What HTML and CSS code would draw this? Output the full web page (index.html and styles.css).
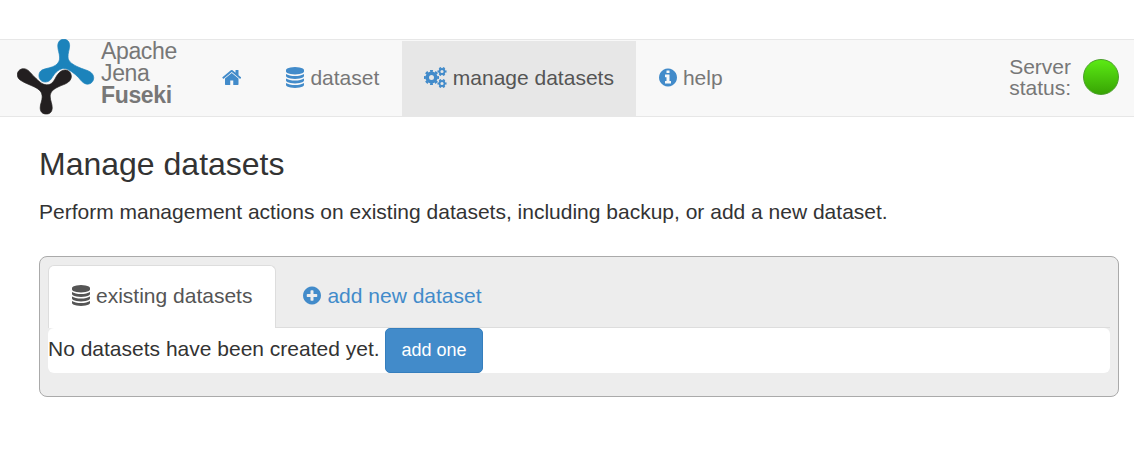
FILE: index.html
```
<!DOCTYPE html>
<html lang="en">
<head>
<meta charset="utf-8">
<title>Apache Jena Fuseki</title>
<link rel="stylesheet" href="styles.css">
</head>
<body>
<svg class="defs" width="0" height="0">
  <symbol id="database" viewBox="128 0 1536 1792"><path d="M896 768q237 0 443-43t325-127v170q0 69-103 128t-280 93.5-385 34.5-385-34.5-280-93.5-103-128v-170q119 84 325 127t443 43zm0 768q237 0 443-43t325-127v170q0 69-103 128t-280 93.5-385 34.5-385-34.5-280-93.5-103-128v-170q119 84 325 127t443 43zm0-384q237 0 443-43t325-127v170q0 69-103 128t-280 93.5-385 34.5-385-34.5-280-93.5-103-128v-170q119 84 325 127t443 43zm0-1152q208 0 385 34.5t280 93.5 103 128v128q0 69-103 128t-280 93.5-385 34.5-385-34.5-280-93.5-103-128v-128q0-69 103-128t280-93.5 385-34.5z"/></symbol>
</svg>
<nav class="navbar">
  <a class="brand">
    <svg class="logo" viewBox="0 0 78 78">
      <path fill="#1c83bb" stroke="#1c83bb" stroke-width=".7" d="M46.700 .3C50.500 .3 52.800 3 52.600 7C52.400 11 50.800 14 51 18C51.200 22 54 24.500 60 27.500C66 30.500 71 31 74 33.500C77.500 36.500 77.500 41 74.500 43.700C71 46.500 67 45 64 41.500C61 37.500 56 33 51 30.500C48 29 45.500 29 42 31C37 34 36 38 33.500 40.800C30.500 43.800 26 43.600 23.500 41C21 38 21.500 33 25 31C29 29 35 29 39 26C42 23.500 42.800 21 42.600 18C42.400 14 40.800 11 40.800 7C40.800 3 43 .3 46.700 .3Z"/>
      <path fill="#231f20" stroke="#231f20" stroke-width=".7" d="M6.500 29.700C11 29.700 13 33.500 17.500 38C22 42.500 25 45.500 29.500 45.800C34 46 36 43.500 38.500 39C41 34 44.500 30.800 48.500 31C53 31.300 55.500 36 53.800 40C51.500 45 45.500 45.500 40 48.500C35 51 33 54 33.200 58C33.400 62 35.300 65 35.200 69C35 73 33 75 29.300 75C25.600 75 23.300 73 23.200 69C23.100 65 25.200 62 25.200 58C25.200 53 22.500 50.500 17.500 48C12.500 45.500 6 43.500 2.500 40.500C-2 36 1 29.700 6.500 29.700Z"/>
    </svg>
    <span class="brand-name">Apache<br>Jena<br><strong>Fuseki</strong></span>
  </a>
  <ul class="menu">
    <li><a><svg class="icon home" viewBox="64 0 1664 1792"><path d="M1472 992v480q0 26-19 45t-45 19h-384v-384h-256v384h-384q-26 0-45-19t-19-45v-480q0-1 .5-3t.5-3l575-474 575 474q1 2 1 6zm223-69l-62 74q-8 9-21 11h-3q-13 0-21-7l-692-577-692 577q-12 8-24 7-13-2-21-11l-62-74q-8-10-7-23.500t11-21.500l719-599q32-26 76-26t76 26l244 204v-195q0-14 9-23t23-9h192q14 0 23 9t9 23v408l219 182q10 8 11 21.500t-7 23.500z"/></svg></a></li>
    <li><a><svg class="icon"><use href="#database"/></svg><span>dataset</span></a></li>
    <li class="active"><a>
      <svg class="icon cogs" viewBox="0 0 22.500 21">
        <g fill="none" stroke="currentColor">
          <circle cx="7.500" cy="10.500" r="4.300" stroke-width="3.600"/>
          <circle cx="7.500" cy="10.500" r="6.600" stroke-width="2" pathLength="16" stroke-dasharray="1.100 .9" stroke-dashoffset=".55"/>
          <circle cx="18" cy="4.500" r="2.500" stroke-width="1.800"/>
          <circle cx="18" cy="4.500" r="3.800" stroke-width="1.500" pathLength="12" stroke-dasharray="1.100 .9" stroke-dashoffset=".55"/>
          <circle cx="18" cy="16.500" r="2.500" stroke-width="1.800"/>
          <circle cx="18" cy="16.500" r="3.800" stroke-width="1.500" pathLength="12" stroke-dasharray="1.100 .9" stroke-dashoffset=".55"/>
        </g>
      </svg><span>manage datasets</span></a></li>
    <li><a><svg class="icon" viewBox="128 0 1536 1792"><path d="M1152 1376v-160q0-14-9-23t-23-9h-96v-512q0-14-9-23t-23-9h-320q-14 0-23 9t-9 23v160q0 14 9 23t23 9h96v320h-96q-14 0-23 9t-9 23v160q0 14 9 23t23 9h448q14 0 23-9t9-23zm-128-896v-160q0-14-9-23t-23-9h-192q-14 0-23 9t-9 23v160q0 14 9 23t23 9h192q14 0 23-9t9-23zm640 416q0 209-103 385.500t-279.500 279.500-385.500 103-385.500-103-279.500-279.500-103-385.500 103-385.500 279.500-279.500 385.500-103 385.500 103 279.500 279.500 103 385.500z"/></svg><span>help</span></a></li>
  </ul>
  <div class="status"><span>Server<br>status:</span><i class="lamp"></i></div>
</nav>
<main class="content">
  <h2>Manage datasets</h2>
  <p>Perform management actions on existing datasets, including backup, or add a new dataset.</p>
  <section class="panel">
    <ul class="tabs">
      <li class="tab selected"><svg class="icon"><use href="#database"/></svg><span>existing datasets</span></li>
      <li class="tab"><svg class="icon" viewBox="128 0 1536 1792"><path d="M1344 960v-128q0-26-19-45t-45-19h-256v-256q0-26-19-45t-45-19h-128q-26 0-45 19t-19 45v256h-256q-26 0-45 19t-19 45v128q0 26 19 45t45 19h256v256q0 26 19 45t45 19h128q26 0 45-19t19-45v-256h256q26 0 45-19t19-45zm320-64q0 209-103 385.500t-279.500 279.500-385.500 103-385.500-103-279.500-279.500-103-385.500 103-385.500 279.500-279.500 385.500-103 385.500 103 279.500 279.500 103 385.500z"/></svg><span>add new dataset</span></li>
    </ul>
    <div class="pane"><span>No datasets have been created yet.</span><button class="btn">add one</button></div>
  </section>
</main>
</body>
</html>
```
FILE: styles.css
```
* { box-sizing: border-box; }
body {
  margin: 0;
  padding-top: 39px;
  background: #fff;
  color: #333;
  font: 21px/30px "Liberation Sans", Arial, sans-serif;
}
.defs { display: block; height: 0; }
ul { list-style: none; margin: 0; padding: 0; display: flex; }
.icon { width: 18px; height: 21px; fill: currentColor; flex: none; }
.navbar {
  display: flex;
  height: 78px;
  background: #f8f8f8;
  border: solid #e7e7e7;
  border-width: 1px 0;
  color: #777;
}
.brand { display: flex; width: 199.400px; padding-left: 17px; }
.logo { width: 78px; height: 78px; margin-top: -1px; flex: none; }
.brand-name { margin-left: 6px; font-size: 23px; line-height: 22px; letter-spacing: -.35px; }
.menu { padding-top: 1px; }
.menu a { display: flex; align-items: center; gap: 6px; height: 75px; padding: 0 22.500px 2px; }
.menu .icon { color: #428bca; }
.menu .home { width: 19.500px; }
.menu .cogs { width: 22.500px; }
.menu .active { background: #e7e7e7; color: #555; }
.status { display: flex; align-items: center; gap: 12px; margin-left: auto; padding: 0 15px 2px 0; line-height: 21px; }
.lamp {
  width: 36px;
  height: 36px;
  border: 1px solid #4b9f2b;
  border-radius: 50%;
  background: linear-gradient(#5bea14, #38a404);
}
.content { padding: 27px 15px 0 39px; }
h2 { margin: 0; font-size: 32px; font-weight: 400; line-height: 40px; }
p { margin: 13px 0 29px; }
.panel { height: 141px; padding: 8px; border: 1px solid #aaa; border-radius: 8px; background: #ededed; }
.tabs { height: 63px; border-bottom: 1px solid #ddd; }
.tab { display: flex; align-items: center; gap: 6px; height: 62px; margin-right: 3px; padding: 0 24px 1px; color: #428bca; }
.selected { height: 63px; border: 1px solid #ddd; border-bottom: 0; border-radius: 6px 6px 0 0; padding: 0 23px 3px; background: #fff; color: #555; }
.pane { display: flex; height: 45px; border-radius: 6px; background: #fff; line-height: 42px; }
.btn {
  width: 98px;
  height: 45px;
  margin-left: 5px;
  padding: 0 0 0 1px;
  border: 1px solid #357ebd;
  border-radius: 5px;
  background: #428bca;
  color: #fff;
  font: 18px "Liberation Sans", Arial, sans-serif;
}
```
